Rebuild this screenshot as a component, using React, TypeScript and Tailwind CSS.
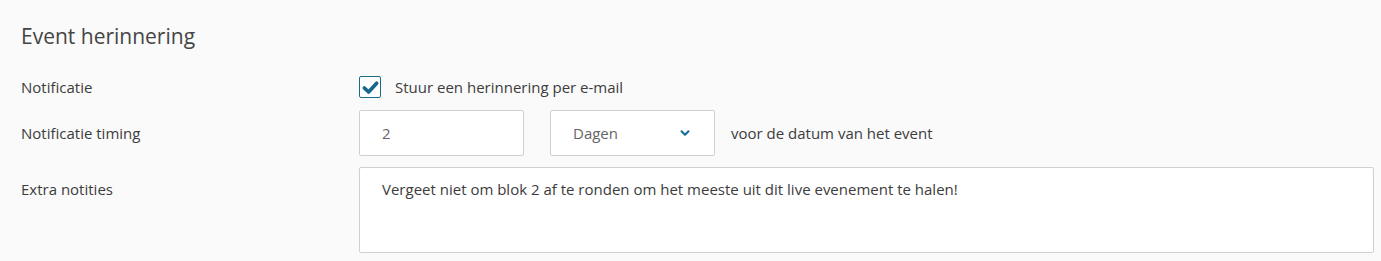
import { ChevronDown } from "lucide-react";

export default function App() {
  return (
    <div className="min-h-[261px] w-full bg-[#fafafa] pl-[21px] pr-2 pt-[21px] font-['Open_Sans',sans-serif] text-[#3c3c3c]">
      <h2 className="text-[21px] leading-[30px] text-[#454545]">Event herinnering</h2>

      <div className="mt-[25px] grid grid-cols-[338px_1fr] items-center gap-y-3 text-[15px]">
        {/* Notificatie */}
        <div className="leading-[22px]">Notificatie</div>
        <label className="flex items-center gap-[14px]">
          <span className="flex h-[22px] w-[22px] items-center justify-center rounded-[2px] border border-[#1b6b8d] bg-white">
            <svg viewBox="0 0 20 20" className="h-[19px] w-[19px]">
              <path d="M3.5 10.5 L8 14.8 L16.5 5.5" fill="none" stroke="#15678b" strokeWidth="3.8" strokeLinecap="round" strokeLinejoin="round" />
            </svg>
          </span>
          <span className="leading-[22px]">Stuur een herinnering per e-mail</span>
        </label>

        {/* Timing */}
        <div>Notificatie timing</div>
        <div className="flex items-center">
          <div className="flex h-[46px] w-[165px] items-center rounded-[2px] border border-[#d0d0d0] bg-white pl-[22px] text-[#666]">
            2
          </div>
          <div className="ml-[26px] flex h-[46px] w-[165px] items-center justify-between rounded-[2px] border border-[#d0d0d0] bg-white pl-[22px] pr-[22px] text-[#666]">
            <span>Dagen</span>
            <ChevronDown className="h-[14px] w-[14px] text-[#10709a]" strokeWidth={3.5} />
          </div>
          <span className="ml-4">voor de datum van het event</span>
        </div>

        {/* Extra notities */}
        <div className="-mt-px self-start pt-[11px]">Extra notities</div>
        <div className="-mt-px h-[86px] w-[1015px] rounded-[2px] border border-[#d0d0d0] bg-white px-[22px] pt-[10px]">
          <span className="whitespace-nowrap">
            Vergeet niet om blok 2 af te ronden om het meeste uit dit live evenement te halen!
          </span>
        </div>
      </div>
    </div>
  );
}
